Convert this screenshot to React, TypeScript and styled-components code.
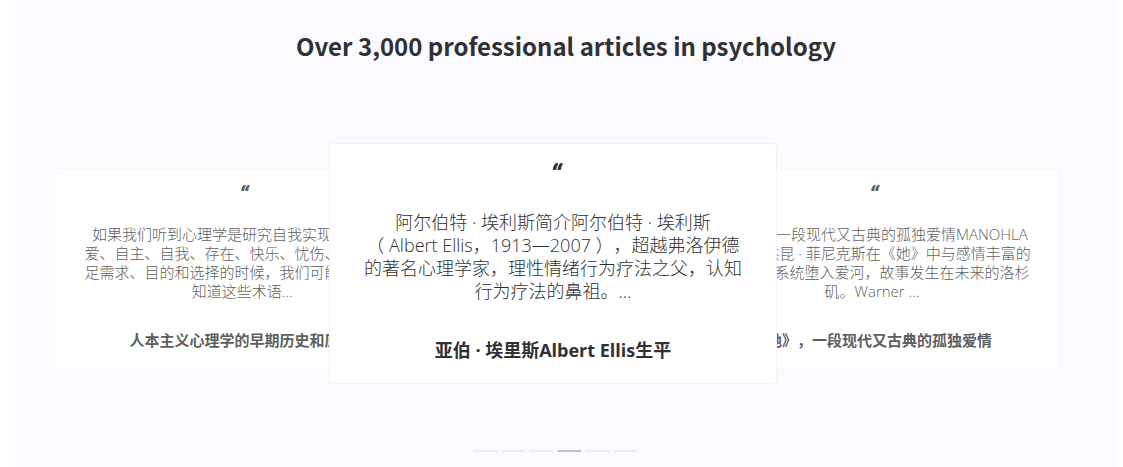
import React from "react";
import styled, { createGlobalStyle } from "styled-components";

const GlobalStyle = createGlobalStyle`
  body {
    margin: 0;
    background: #ffffff;
    color: #303133;
    font-family: "Open Sans", "Noto Sans CJK SC", sans-serif;
    text-spacing-trim: space-all;
  }
`;

const Page = styled.main`
  padding: 0 6px 1px 15px;
`;

const Section = styled.section`
  background: #fafaff;
  padding-bottom: 15px;
  overflow: hidden;
`;

const Heading = styled.h2`
  margin: 0;
  padding: 28px 0 79px;
  font: 700 24px/36px "Noto Sans CJK SC", sans-serif;
  text-align: center;
`;

const Carousel = styled.div`
  display: flex;
  align-items: flex-start;
  padding: 0 58px 0 40px;
`;

const Card = styled.article<{ $active?: boolean }>`
  box-sizing: border-box;
  flex: ${(p) => (p.$active ? "448 1 0" : "374 1 0")};
  min-width: 0;
  position: relative;
  z-index: ${(p) => (p.$active ? 1 : 0)};
  margin: ${(p) => (p.$active ? "0 -92px 0 -100px" : "25px 0 0")};
  padding: ${(p) => (p.$active ? "15px 0 19px" : "13px 0 16px")};
  border: 1px solid ${(p) => (p.$active ? "#f2f2f8" : "#f8f8fc")};
  border-radius: 3px;
  background: #ffffff;
  color: ${(p) => (p.$active ? "#303133" : "#5e5f61")};
  font-size: ${(p) => (p.$active ? 18 : 15)}px;
  text-align: center;
  white-space: nowrap;
`;

const Quote = styled.div<{ $active?: boolean }>`
  padding-left: ${(p) => (p.$active ? 6 : 4)}px;
  height: ${(p) => (p.$active ? 52 : 43)}px;
  font: italic 900 ${(p) => (p.$active ? "28px/32px" : "24px/26px")} Roboto, sans-serif;
`;

const Excerpt = styled.p<{ $active?: boolean }>`
  display: flex;
  flex-direction: column;
  align-items: center;
  margin: 0;
  font-weight: 300;
  line-height: ${(p) => (p.$active ? 23 : 19)}px;
`;

const Title = styled.h3<{ $active?: boolean }>`
  margin: ${(p) => (p.$active ? "34px 0 0" : "28px 0 0")};
  font-size: ${(p) => (p.$active ? 18 : 15)}px;
  font-weight: 700;
  line-height: ${(p) => (p.$active ? 27 : 23)}px;
`;

const Indicators = styled.div`
  display: flex;
  justify-content: center;
  gap: 5px;
  padding: 61px 22px 0 0;
`;

const Indicator = styled.button<{ $active?: boolean }>`
  width: 23px;
  height: 12px;
  padding: 5px 0;
  border: 0;
  background: ${(p) => (p.$active ? "#c0c0c8" : "#ededf2")} content-box;
  cursor: pointer;
`;

const articles = [
  {
    lines: [
      "如果我们听到心理学是研究自我实现、希望、",
      "爱、自主、自我、存在、快乐、忧伤、意义、满",
      "足需求、目的和选择的时候，我们可能还没有真",
      "知道这些术语…",
    ],
    title: "人本主义心理学的早期历史和原理",
  },
  {
    active: true,
    lines: [
      "阿尔伯特 · 埃利斯简介阿尔伯特 · 埃利斯",
      "（ Albert Ellis，1913—2007 ），超越弗洛伊德",
      "的著名心理学家，理性情绪行为疗法之父，认知",
      "行为疗法的鼻祖。…",
    ],
    title: "亚伯 · 埃里斯Albert Ellis生平",
  },
  {
    lines: [
      "《她》，一段现代又古典的孤独爱情MANOHLA",
      "DARGIS杰昆 · 菲尼克斯在《她》中与感情丰富的",
      "智能操作系统堕入爱河，故事发生在未来的洛杉",
      "矶。Warner …",
    ],
    title: "《她》，一段现代又古典的孤独爱情",
  },
];

export default function App() {
  return (
    <>
      <GlobalStyle />
      <Page>
        <Section>
          <Heading>Over 3,000 professional articles in psychology</Heading>
          <Carousel>
            {articles.map((a) => (
              <Card key={a.title} $active={a.active}>
                <Quote $active={a.active}>“</Quote>
                <Excerpt $active={a.active}>
                  {a.lines.map((line) => (
                    <span key={line}>{line}</span>
                  ))}
                </Excerpt>
                <Title $active={a.active}>{a.title}</Title>
              </Card>
            ))}
          </Carousel>
          <Indicators>
            {[1, 2, 3, 4, 5, 6].map((n) => (
              <Indicator key={n} type="button" aria-label={`Slide ${n}`} $active={n === 4} />
            ))}
          </Indicators>
        </Section>
      </Page>
    </>
  );
}
